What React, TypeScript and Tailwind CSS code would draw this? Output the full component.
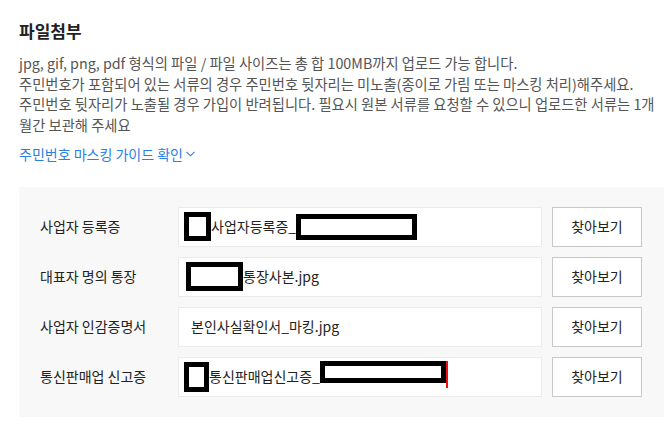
const font = { fontFamily: '"Noto Sans CJK KR", "Noto Sans", sans-serif' };

function Redact({ className }: { className: string }) {
  return <span className={`inline-block shrink-0 border-black bg-white ${className}`} />;
}

function FileRow({ label, children }: { label: string; children: React.ReactNode }) {
  return (
    <div className="flex items-center">
      <div className="w-[128px] shrink-0 text-[14px] text-[#222]">{label}</div>
      <div className="ml-[10px] flex h-[40px] w-[364px] items-center whitespace-nowrap border border-[#ebebeb] bg-white pl-[5px] text-[14px] text-[#222]">
        {children}
      </div>
      <button className="ml-[10px] h-[40px] w-[90px] border border-[#c8c8c8] bg-white text-[14px] text-[#222]">
        찾아보기
      </button>
    </div>
  );
}

export default function App() {
  return (
    <div style={font} className="h-[424px] w-[664px] overflow-hidden bg-white pl-[19px] pt-[20px]">
      <h2 className="text-[17px] font-bold leading-[22px] text-[#222]">파일첨부</h2>
      <p className="mt-[11px] whitespace-nowrap text-[14.3px] leading-[20.7px] text-[#555]">
        jpg, gif, png, pdf 형식의 파일 / 파일 사이즈는 총 합 100MB까지 업로드 가능 합니다.
        <br />
        주민번호가 포함되어 있는 서류의 경우 주민번호 뒷자리는 미노출(종이로 가림 또는 마스킹 처리)해주세요.
        <br />
        주민번호 뒷자리가 노출될 경우 가입이 반려됩니다. 필요시 원본 서류를 요청할 수 있으니 업로드한 서류는 1개
        <br />
        월간 보관해 주세요
      </p>
      <a className="mt-[8px] flex items-center gap-[3px] text-[14px] leading-[20px] text-[#2b7fe3]">
        주민번호 마스킹 가이드 확인
        <svg width="9" height="6" viewBox="0 0 9 6" fill="none" stroke="currentColor" strokeWidth="1.1">
          <path d="M0.5 0.8 L4.5 4.8 L8.5 0.8" />
        </svg>
      </a>

      <div className="mt-[23px] flex flex-col gap-[10px] bg-[#f8f8f8] py-[20px] pl-[21px]">
        <FileRow label="사업자 등록증">
          <Redact className="h-[29px] w-[27px] border-[5px]" />
          <span>사업자등록증_</span>
          <Redact className="h-[26px] w-[121px] border-[5px]" />
        </FileRow>
        <FileRow label="대표자 명의 통장">
          <Redact className="ml-[2px] h-[29px] w-[57px] border-[5px]" />
          <span>통장사본.jpg</span>
        </FileRow>
        <FileRow label="사업자 인감증명서">
          <span className="ml-[7px]">본인사실확인서_마킹.jpg</span>
        </FileRow>
        <FileRow label="통신판매업 신고증">
          <Redact className="h-[30px] w-[25px] border-[5px]" />
          <span>통신판매업신고증_</span>
          <span className="-translate-y-[2px] border-r-2 border-[#e11]">
            <Redact className="block h-[22px] w-[126px] border-[5px]" />
          </span>
        </FileRow>
      </div>
    </div>
  );
}
